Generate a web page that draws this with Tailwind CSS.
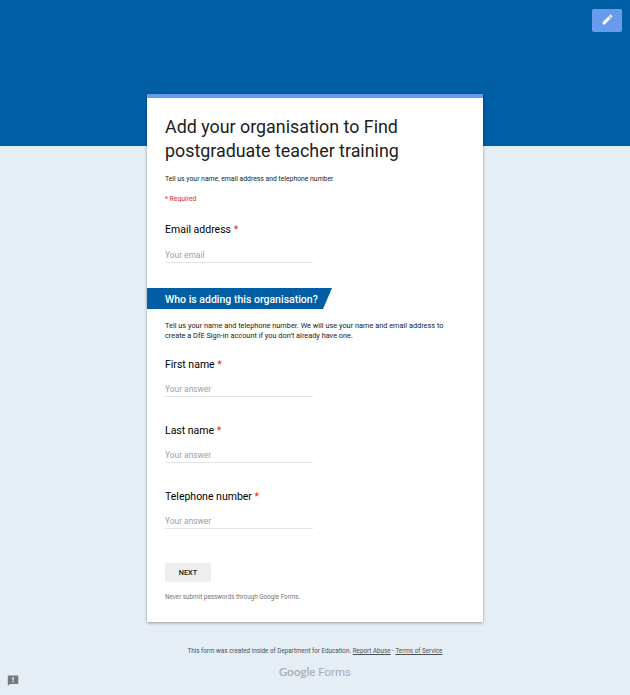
<!DOCTYPE html>
<html lang="en">
<head>
<meta charset="utf-8">
<title>Add your organisation</title>
<script src="https://cdn.jsdelivr.net/npm/@tailwindcss/browser@4"></script>
</head>
<body class="relative h-[695px] overflow-hidden bg-[#e5edf5] bg-[linear-gradient(#005ea5,#005ea5)] bg-[length:100%_146px] bg-no-repeat pt-[94px] font-['Roboto',sans-serif] text-[#212121]">
<button aria-label="Edit" class="absolute right-2 top-[9px] flex h-[23px] w-[30px] items-center justify-center rounded-[2px] bg-[#689bec] pb-[2px]">
<svg class="size-[13px]" viewBox="0 0 24 24" fill="#fff"><path d="M3 17.250V21h3.750L17.810 9.940l-3.750-3.750L3 17.250zM20.710 7.040a1 1 0 0 0 0-1.410l-2.340-2.340a1 1 0 0 0-1.410 0l-1.830 1.830 3.750 3.750 1.830-1.830z"/></svg>
</button>
<main class="mx-auto h-[528px] w-[336px] border-t-4 border-[#689bec] bg-white shadow-[0_1px_3px_rgba(0,0,0,0.35)]">
<form class="flex flex-col">
<header class="px-[18px] pt-[17px]">
<h1 class="whitespace-nowrap text-[17.85px] leading-6">Add your organisation to Find<br>postgraduate teacher training</h1>
<p class="mt-[11px] text-[6.82px] leading-[10px]">Tell us your name, email address and telephone number</p>
<p class="mt-[10px] text-[6.82px] leading-[10px] text-[#e5281f]">* Required</p>
</header>
<label class="mt-[19px] flex h-[65px] flex-col px-[18px] text-[10.5px] leading-[14px] text-black"><span>Email address <span class="text-[#e5281f]">*</span></span><span class="mt-[11px] h-[15px] w-[148px] border-b border-[#e4e4e4] text-[8.4px] leading-[14px] text-[#a0a0a0]">Your email</span></label>
<h2 class="h-[21px] w-[185px] bg-[#005ea5] pl-[18px] text-[10.5px] font-medium leading-[23px] whitespace-nowrap text-white [clip-path:polygon(0_0,100%_0,176px_100%,0_100%)]">Who is adding this organisation?</h2>
<p class="mt-[12px] whitespace-nowrap px-[18px] text-[7.35px] leading-[9.5px]">Tell us your name and telephone number. We will use your name and email address to<br>create a DfE Sign-in account if you don’t already have one.</p>
<label class="mt-[18px] flex h-[66px] flex-col px-[18px] text-[10.5px] leading-[14px] text-black"><span>First name <span class="text-[#e5281f]">*</span></span><span class="mt-[11px] h-[14px] w-[148px] border-b border-[#e4e4e4] text-[8.4px] leading-[13px] text-[#a0a0a0]">Your answer</span></label>
<label class="flex h-[66px] flex-col px-[18px] text-[10.5px] leading-[14px] text-black"><span>Last name <span class="text-[#e5281f]">*</span></span><span class="mt-[11px] h-[14px] w-[148px] border-b border-[#e4e4e4] text-[8.4px] leading-[13px] text-[#a0a0a0]">Your answer</span></label>
<label class="flex h-[73px] flex-col px-[18px] text-[10.5px] leading-[14px] text-black"><span>Telephone number <span class="text-[#e5281f]">*</span></span><span class="mt-[11px] h-[14px] w-[148px] border-b border-[#e4e4e4] text-[8.4px] leading-[13px] text-[#a0a0a0]">Your answer</span></label>
<button type="button" class="ml-[18px] h-[19px] w-[46px] rounded-[1px] bg-[#eee] text-[7.35px] font-medium">NEXT</button>
<p class="ml-[18px] mt-[10px] text-[6.3px] leading-[10px] text-[#757575]">Never submit passwords through Google Forms.</p>
</form>
</main>
<footer class="flex flex-col items-center pt-[24px] text-[6.3px] leading-[11px] text-[#4c5157]">
<p>This form was created inside of Department for Education. <a class="underline">Report Abuse</a> - <a class="underline">Terms of Service</a></p>
<p class="mt-[7px] flex gap-[3px] text-[11.5px] leading-4 text-[#a6acb3]"><span class="font-['Lato',sans-serif] font-medium [-webkit-text-stroke:0.1px_#a6acb3]">Google</span><span>Forms</span></p>
</footer>
<svg class="absolute left-[7px] top-[675px] h-[11px] w-[12px]" viewBox="0 0 12 11"><path fill="#75797c" d="M1.500.5h9q.8 0 .8.8v6.900q0 .8-.8.8H3L.8 11V1.300Q.8.5 1.500.5z"/><path fill="#e5edf5" d="M5.400 2h1.300v3.400H5.400zM5.400 6.300h1.300v1.300H5.400z"/></svg>
</body>
</html>
